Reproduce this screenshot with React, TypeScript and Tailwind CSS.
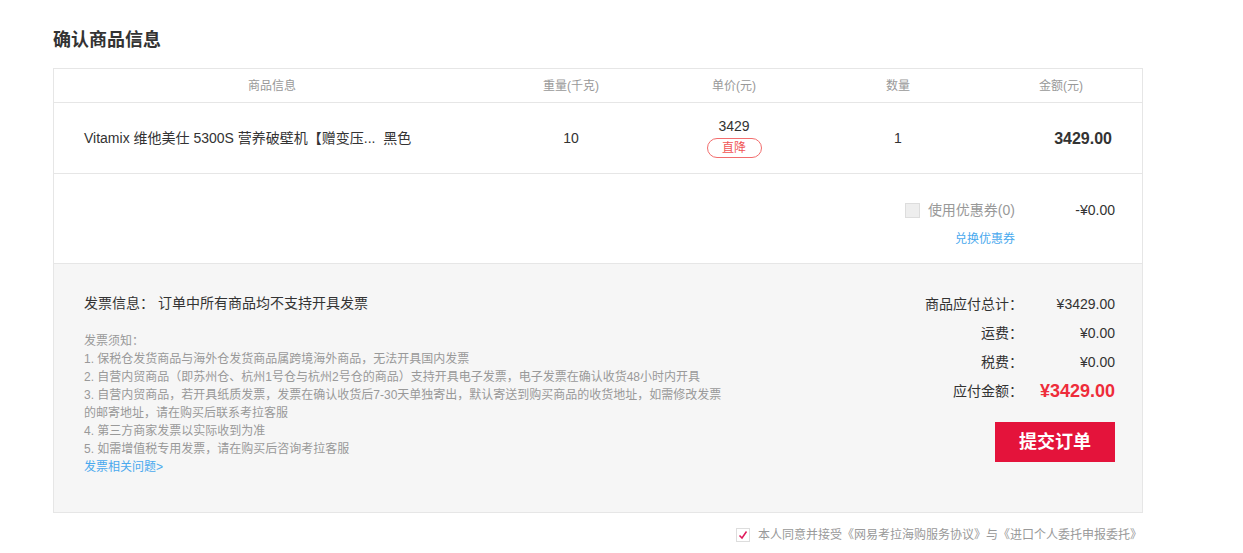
import React from "react";

const FONT = "font-['Liberation_Sans','Noto_Sans_CJK_SC',sans-serif]";

const NOTES = [
  "发票须知：",
  "1. 保税仓发货商品与海外仓发货商品属跨境海外商品，无法开具国内发票",
  "2. 自营内贸商品（即苏州仓、杭州1号仓与杭州2号仓的商品）支持开具电子发票，电子发票在确认收货48小时内开具",
  "3. 自营内贸商品，若开具纸质发票，发票在确认收货后7-30天单独寄出，默认寄送到购买商品的收货地址，如需修改发票的邮寄地址，请在购买后联系考拉客服",
  "4. 第三方商家发票以实际收到为准",
  "5. 如需增值税专用发票，请在购买后咨询考拉客服",
];

const SUMMARY = [
  { label: "商品应付总计：", value: "¥3429.00" },
  { label: "运费：", value: "¥0.00" },
  { label: "税费：", value: "¥0.00" },
];

export default function App() {
  return (
    <div className={`${FONT} min-h-screen bg-white text-[#333]`}>
      <div className="w-[1090px] ml-[53px] pt-[28px]">
        {/* Title */}
        <h1 className="text-[18px] font-bold leading-[24px] h-[40px]">确认商品信息</h1>

        {/* Table */}
        <div className="border border-[#e6e6e6]">
          {/* Header */}
          <div className="flex h-[34px] items-center text-[12px] text-[#999] border-b border-[#e6e6e6]">
            <div className="w-[436px] text-center">商品信息</div>
            <div className="w-[162px] text-center">重量(千克)</div>
            <div className="w-[164px] text-center">单价(元)</div>
            <div className="w-[164px] text-center">数量</div>
            <div className="flex-1 text-center">金额(元)</div>
          </div>

          {/* Product row */}
          <div className="flex h-[71px] items-center text-[14px] border-b border-[#e6e6e6]">
            <div className="w-[436px] pl-[30px] pt-[1px]">Vitamix 维他美仕 5300S 营养破壁机【赠变压...&nbsp; 黑色</div>
            <div className="w-[162px] text-center pt-[1px]">10</div>
            <div className="w-[164px] flex flex-col items-center">
              <span className="leading-[16px]">3429</span>
              <span className="mt-[4px] w-[55px] h-[20px] rounded-full border border-[#f26d6d] text-[#f05555] text-[12px] leading-[18px] text-center">
                直降
              </span>
            </div>
            <div className="w-[164px] text-center pt-[1px]">1</div>
            <div className="flex-1 text-right pr-[30px] text-[16px] font-bold pt-[1px]">3429.00</div>
          </div>

          {/* Coupon row */}
          <div className="h-[90px] border-b border-[#e6e6e6] flex flex-col items-end pr-[27px] pt-[26px]">
            <div className="flex items-center text-[14px]">
              <span className="w-[15px] h-[15px] border border-[#ddd] bg-[#eee] mr-[8px]" />
              <span className="text-[#999]">使用优惠券(0)</span>
              <span className="w-[100px] text-right">-¥0.00</span>
            </div>
            <div className="mr-[100px] mt-[9px] text-[12px] text-[#49a9ee]">兑换优惠券</div>
          </div>

          {/* Invoice + summary */}
          <div className="h-[248px] bg-[#f6f6f6] flex justify-between pl-[30px] pr-[27px] pt-[26px]">
            <div className="w-[642px] pt-[4px]">
              <p className="text-[14px] leading-[18px]">发票信息：&nbsp;订单中所有商品均不支持开具发票</p>
              <div className="mt-[20px] text-[12px] leading-[18px] text-[#999]">
                {NOTES.map((n) => (
                  <p key={n}>{n}</p>
                ))}
                <p className="text-[#49a9ee]">发票相关问题&gt;</p>
              </div>
            </div>
            <div className="flex flex-col items-end">
              {SUMMARY.map((r) => (
                <div key={r.label} className="flex items-center h-[29px] text-[14px]">
                  <span className="text-right">{r.label}</span>
                  <span className="w-[92px] text-right">{r.value}</span>
                </div>
              ))}
              <div className="flex items-center h-[29px]">
                <span className="text-[14px]">应付金额：</span>
                <span className="w-[92px] text-right text-[18px] font-bold text-[#ee2c3a]">¥3429.00</span>
              </div>
              <button className="mt-[16px] w-[120px] h-[40px] bg-[#e4133b] text-white text-[18px] font-bold">
                提交订单
              </button>
            </div>
          </div>
        </div>

        {/* Agreement */}
        <div className="flex justify-end items-center mt-[13px] pr-[1px] text-[12px] text-[#999]">
          <span className="w-[14px] h-[14px] border border-[#ddd] bg-white flex items-center justify-center mr-[8px]">
            <svg width="10" height="10" viewBox="0 0 10 10">
              <path d="M1.5 5.5 L4 8 L8.5 1.5" fill="none" stroke="#e0195a" strokeWidth="1.5" />
            </svg>
          </span>
          <span>本人同意并接受《网易考拉海购服务协议》与《进口个人委托申报委托》</span>
        </div>
      </div>
    </div>
  );
}
